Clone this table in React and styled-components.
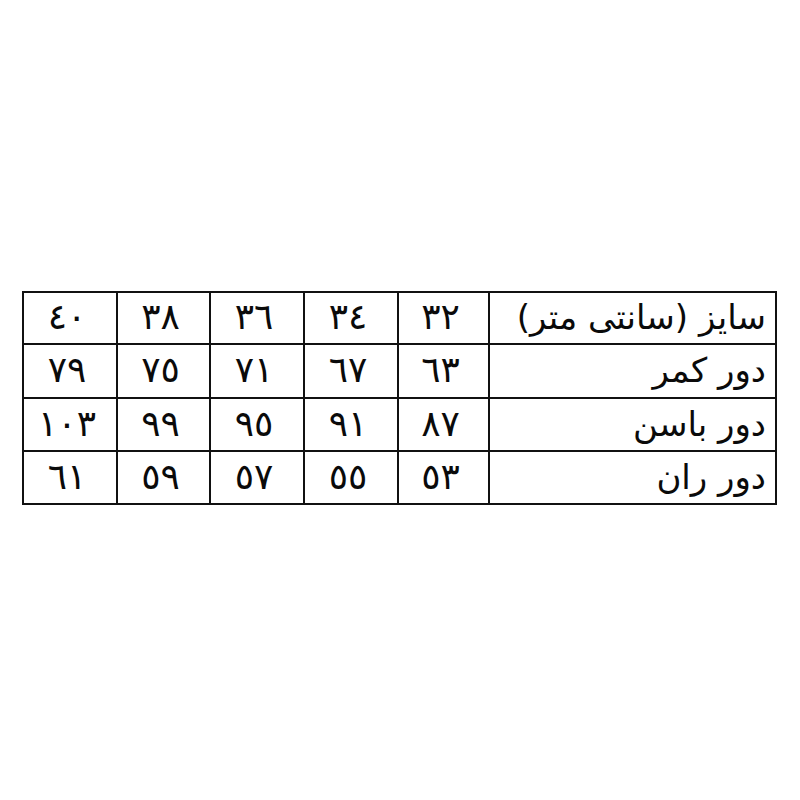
import React from "react";
import styled, { createGlobalStyle } from "styled-components";

const Global = createGlobalStyle`
  html, body { margin: 0; padding: 0; background: #fff; }
  body { font-family: "DejaVu Sans", "Liberation Sans", sans-serif; }
`;

const Page = styled.div`
  width: 800px;
  height: 800px;
  box-sizing: border-box;
  padding: 291px 0 0 22px;
  background: #fff;
`;

const Table = styled.div`
  direction: rtl;
  display: grid;
  grid-template-columns: 285px 89px 92px 92px 91px 92px;
  grid-template-rows: 50px 52px 51px 51px;
  gap: 2px;
  width: max-content;
  border: 2px solid #111;
  background: #111;
`;

const Cell = styled.div`
  background: #fff;
  display: flex;
  align-items: center;
  color: #0a0a0a;
  line-height: 1;
  white-space: nowrap;
  overflow: hidden;
`;

const LabelCell = styled(Cell)`
  justify-content: flex-start;
  padding-right: 9px;
  font-family: "DejaVu Sans", "Liberation Sans", sans-serif;
  font-size: 34px;
  padding-bottom: 2px;
`;

const NumCell = styled(Cell)`
  justify-content: center;
  font-family: "DejaVu Sans", sans-serif;
  font-size: 36px;
  letter-spacing: 6px;
  padding-right: 6px;
  padding-bottom: 2px;
`;

const rows = [
  ["سایز (سانتی متر)", "٣٢", "٣٤", "٣٦", "٣٨", "٤٠"],
  ["دور کمر", "٦٣", "٦٧", "٧١", "٧٥", "٧٩"],
  ["دور باسن", "٨٧", "٩١", "٩٥", "٩٩", "١٠٣"],
  ["دور ران", "٥٣", "٥٥", "٥٧", "٥٩", "٦١"],
];

export default function App() {
  return (
    <>
      <Global />
      <Page>
        <Table>
          {rows.map((r, i) =>
            r.map((c, j) =>
              j === 0 ? (
                <LabelCell key={`${i}-${j}`}>{c}</LabelCell>
              ) : (
                <NumCell key={`${i}-${j}`}>{c}</NumCell>
              )
            )
          )}
        </Table>
      </Page>
    </>
  );
}
